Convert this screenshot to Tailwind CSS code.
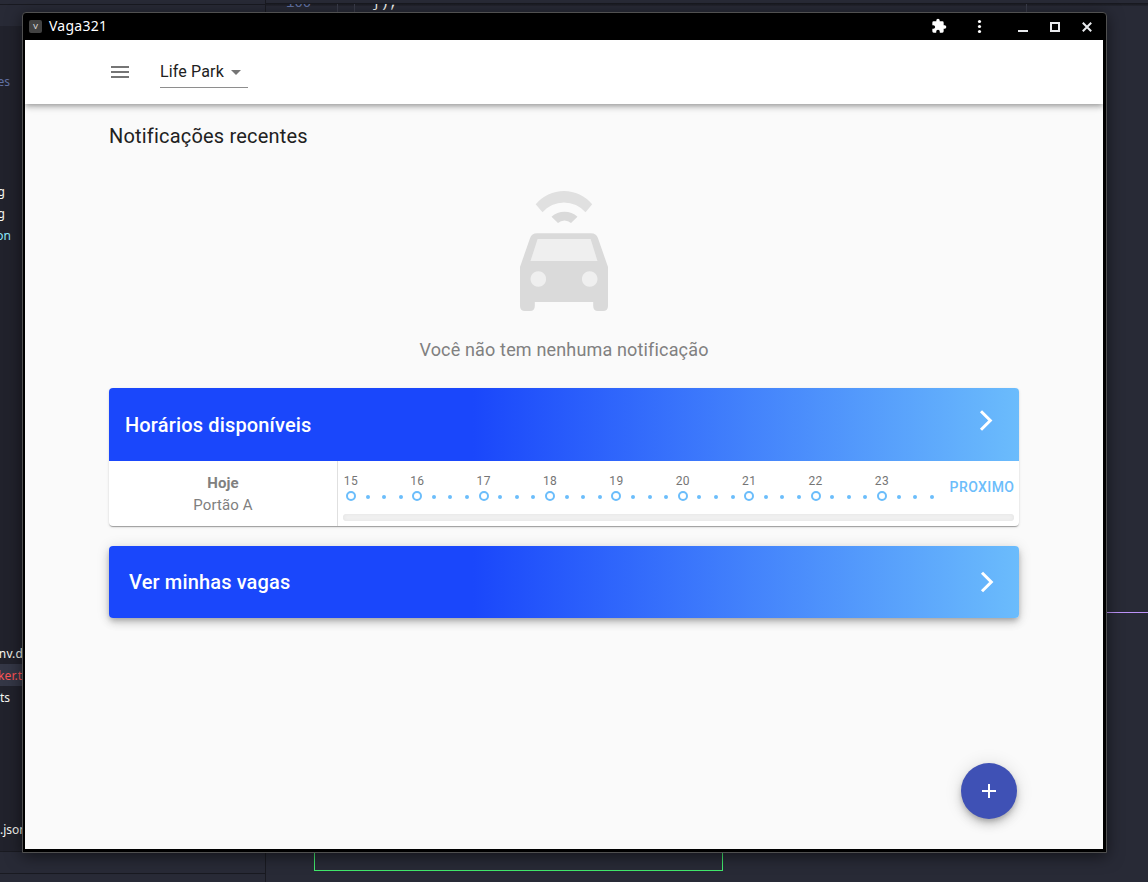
<!DOCTYPE html>
<html lang="pt-BR">
<head>
<meta charset="utf-8">
<title>Vaga321</title>
<script src="https://cdn.jsdelivr.net/npm/@tailwindcss/browser@4"></script>
</head>
<body class="relative w-[1148px] h-[882px] overflow-hidden bg-[#282a36] font-['Roboto',sans-serif]">

<!-- Code editor behind the window -->
<div class="absolute inset-0 overflow-hidden font-['Noto_Sans',sans-serif] text-[12px] leading-[22px] text-[#f8f8f2] whitespace-nowrap">
  <div class="absolute left-0 top-[26px] w-[265px] h-[825px] bg-[#21222c]"></div>
  <div class="absolute left-0 top-[4px] w-[265px] h-px bg-[#191a21]"></div>
  <div class="absolute left-0 top-[851px] w-[265px] h-px bg-[#191a21]"></div>
  <div class="absolute left-0 top-[873px] w-[265px] h-px bg-[#191a21]"></div>
  <div class="absolute left-[265px] top-0 w-px h-[882px] bg-[#191a21]"></div>
  <div class="absolute left-[266px] top-[3px] right-0 h-[3px] bg-linear-to-b from-[#16171d] to-[#23252f]"></div>
  <div class="absolute left-[286px] top-[4px] w-[160px] h-[9px] overflow-hidden font-['Liberation_Mono',monospace] text-[14px]">
    <span class="absolute left-0 top-[-12px] text-[#6272a4]">100</span>
    <span class="absolute left-[86px] top-[-12px]">});</span>
  </div>
  <div class="absolute left-[337px] top-[4px] w-px h-[9px] bg-[#3a3c4a]"></div>
  <div class="absolute left-[354px] top-[4px] w-px h-[9px] bg-[#3a3c4a]"></div>
  <div class="absolute left-[1026px] top-[4px] w-px h-[9px] bg-[#3a3c4a]"></div>
  <div class="absolute left-0 top-[664px] w-[265px] h-[22px] bg-[#343746]"></div>
  <div class="absolute right-[1138px] top-[71px] text-[#6272a4]">nodules</div>
  <div class="absolute right-[1143px] top-[181px]">config</div>
  <div class="absolute right-[1143px] top-[203px]">config</div>
  <div class="absolute right-[1137px] top-[225px] text-[#8be9fd]">json</div>
  <div class="absolute left-[-8px] top-[643px] tracking-[0.1px]">env.d.ts</div>
  <div class="absolute left-[-2px] top-[665px] text-[#ff5555] tracking-[0.1px]">ker.ts</div>
  <div class="absolute right-[1138px] top-[687px]">.ts</div>
  <div class="absolute left-0 top-[819px]">.json</div>
  <div class="absolute left-[1100px] top-[612px] w-[48px] h-px bg-[#bd93f9]"></div>
  <div class="absolute left-[314px] top-[840px] w-[409px] h-[31px] border border-[#41e86c]"></div>
</div>

<!-- Application window -->
<div class="absolute left-[22px] top-[12px] w-[1085px] h-[841px] flex flex-col rounded-t-[4px] border border-[#505050] bg-black pl-[2px] pr-[3px] pb-[3px] shadow-[0_3px_16px_rgba(0,0,0,0.55)]">
  <div class="flex h-[27px] shrink-0 items-center pl-[4px] pr-[11px] text-white">
    <div class="flex size-[13px] items-center justify-center rounded-[2px] bg-[#424242] text-[8px] leading-none text-[#e0e0e0]">V</div>
    <div class="ml-[7px] mb-[2px] font-['Noto_Sans',sans-serif] text-[14px] leading-[20px] tracking-[0.25px]">Vaga321</div>
    <svg class="ml-auto mb-[2px] size-[16px]" viewBox="0 0 24 24" fill="#fff"><path d="M20.5 11H19V7a2 2 0 0 0-2-2h-4V3.5a2.5 2.5 0 0 0-5 0V5H4a2 2 0 0 0-2 2v3.800h1.500a2.700 2.700 0 0 1 0 5.400H2V20a2 2 0 0 0 2 2h3.800v-1.500a2.700 2.700 0 0 1 5.400 0V22H17a2 2 0 0 0 2-2v-4h1.500a2.500 2.500 0 0 0 0-5z"/></svg>
    <svg class="ml-[30px] w-[5px] h-[15px]" viewBox="0 0 5 15" fill="#fff"><circle cx="2.500" cy="2.500" r="1.600"/><circle cx="2.500" cy="7.500" r="1.600"/><circle cx="2.500" cy="12.500" r="1.600"/></svg>
    <svg class="ml-[36px] mt-px w-[10px] h-[10px]" viewBox="0 0 10 10" fill="#e8eaed"><path d="M0 8h10v2H0z"/></svg>
    <div class="ml-[22px] mt-px size-[10px] border-2 border-[#e8eaed]"></div>
    <svg class="ml-[22px] mt-px size-[10px]" viewBox="0 0 10 10" fill="none" stroke="#e8eaed" stroke-width="2"><path d="M.8.800l8.400 8.400M9.200.800L.8 9.200"/></svg>
  </div>

  <div class="relative flex flex-1 flex-col bg-[#fafafa] overflow-hidden">
    <header class="flex h-[64px] shrink-0 items-center bg-white pl-[86px] shadow-[0_2px_4px_-1px_rgba(0,0,0,0.2),0_4px_5px_0_rgba(0,0,0,0.14),0_1px_10px_0_rgba(0,0,0,0.12)]">
      <svg class="w-[18px] h-[12px]" viewBox="0 0 18 12" fill="#757575"><path d="M0 0h18v2H0zM0 5h18v2H0zM0 10h18v2H0z"/></svg>
      <div class="ml-[31px] flex h-[32px] w-[88px] items-center border-b border-[#8e8e8e] text-[16px] text-[#212121]">
        <span class="leading-[30px] whitespace-nowrap tracking-[0.15px]">Life Park</span>
        <svg class="ml-auto mr-[7px] mt-px w-[10px] h-[5px]" viewBox="0 0 10 5" fill="#757575"><path d="M0 0l5 5 5-5z"/></svg>
      </div>
    </header>

    <main class="flex flex-col px-[84px] pt-[16px]">
      <h1 class="text-[20px] leading-[32px] tracking-[0.19px] text-[#212121]">Notificações recentes</h1>

      <div class="mt-[38px] flex flex-col items-center">
        <svg class="w-[90px] h-[122px]" viewBox="519 190 90 122">
          <path fill="#e0e0e0" d="M535.700 204.300A36.500 36.500 0 0 1 592.200 204.300L585.500 212.200A28.500 28.500 0 0 0 542.500 212.200Z"/>
          <path fill="#dadada" d="M551.500 216.800A19.400 19.400 0 0 1 577.500 216.800L571 223A9.500 9.500 0 0 0 558 223Z"/>
          <path fill="#efefef" d="M534 237h60l6 27v30h-72v-30z"/>
          <path fill="#dadada" fill-rule="evenodd" d="M537 233.300H591Q596.300 233.300 598 238.200L608 267V306Q608 311 603 311H598Q593.200 311 593.200 306V302H534.800V306Q534.800 311 530 311H525Q520 311 520 306V267L530 238.200Q531.700 233.300 537 233.300ZM537.600 239L530.500 261H597.500L590.600 239ZM538.300 271.200a7.800 7.800 0 1 0 .01 0ZM589.700 271.200a7.800 7.800 0 1 0 .01 0Z"/>
        </svg>
        <p class="mt-[24px] text-[18px] leading-[28px] tracking-[0.16px] text-[#808080]">Você não tem nenhuma notificação</p>
      </div>

      <section class="mt-[24px] h-[138px] overflow-hidden rounded-[4px] bg-white shadow-[0_2px_1px_-1px_rgba(0,0,0,0.2),0_1px_1px_0_rgba(0,0,0,0.14),0_1px_3px_0_rgba(0,0,0,0.12)]">
        <div class="flex h-[73px] items-center justify-between bg-linear-to-r/srgb from-[#1a47fb] from-40% to-[#6bbcfc] px-[16px] text-white">
          <h2 class="text-[20px] font-medium tracking-[0.16px]">Horários disponíveis</h2>
          <svg class="mb-[8px] mr-[10px] w-[14px] h-[22px]" viewBox="0 0 14 22" fill="none" stroke="#fff" stroke-width="3"><path d="M2 1.200L11.300 10.500L2 19.800"/></svg>
        </div>
        <div class="flex h-[65px]">
          <div class="flex w-[229px] shrink-0 flex-col items-center justify-center border-r border-[#e0e0e0] text-[15px] leading-[22px] text-[#808080] tracking-[0.1px]">
            <b class="font-bold">Hoje</b>
            <span>Portão A</span>
          </div>
          <div class="flex flex-1 flex-col pl-[5px] pr-[5px] pt-[12px]">
            <div class="flex h-[30px]">
              <div id="timeline" class="-ml-[0.4px] flex w-[597.4px] shrink-0"></div>
              <div class="ml-[9.600px] mt-[2px] text-[14px] font-medium leading-[24px] tracking-[0.4px] text-[#6bbdfb]">PROXIMO</div>
            </div>
            <div class="mt-[11px] h-[7px] rounded-[3px] bg-[#f1f1f1] shadow-[inset_0_0_4px_rgba(0,0,0,0.06)]"></div>
          </div>
        </div>
      </section>

      <section class="mt-[20px] flex h-[72px] items-center justify-between rounded-[4px] bg-linear-to-r/srgb from-[#1a47fb] from-40% to-[#6bbcfc] pl-[20px] pr-[25px] text-white shadow-[0_3px_5px_-1px_rgba(0,0,0,0.2),0_5px_8px_0_rgba(0,0,0,0.14),0_1px_14px_0_rgba(0,0,0,0.12)]">
        <h2 class="text-[20px] font-medium tracking-[0.15px]">Ver minhas vagas</h2>
        <svg class="w-[14px] h-[22px]" viewBox="0 0 14 22" fill="none" stroke="#fff" stroke-width="3"><path d="M2 1.700L11.300 11L2 20.300"/></svg>
      </section>
    </main>

    <button class="absolute left-[936px] top-[723px] flex size-[56px] items-center justify-center rounded-full bg-[#3f51b5] shadow-[0_3px_5px_-1px_rgba(0,0,0,0.2),0_6px_10px_0_rgba(0,0,0,0.14),0_1px_18px_0_rgba(0,0,0,0.12)]">
      <svg class="size-[14px]" viewBox="0 0 14 14" fill="#fff"><path d="M6 0h2v6h6v2H8v6H6V8H0V6h6z"/></svg>
    </button>
  </div>
</div>

<script>
  // One slot per quarter of an hour, with a labelled ring on each full hour.
  const timeline = document.getElementById('timeline');
  for (let i = 0; i < 36; i++) {
    const hour = i % 4 === 0;
    const slot = document.createElement('div');
    slot.className = 'flex flex-1 min-w-0 flex-col items-center';
    slot.innerHTML =
      '<span class="h-[16px] text-[12px] leading-[16px] tracking-[0.3px] text-[#757575]">' + (hour ? 15 + i / 4 : '') + '</span>' +
      '<span class="flex h-[14px] items-center">' +
      (hour ? '<i class="size-[10px] rounded-full border-2 border-[#6bbdfb]"></i>'
            : '<i class="mt-[1px] size-[4px] rounded-full bg-[#6bbdfb]"></i>') + '</span>';
    timeline.appendChild(slot);
  }
</script>
</body>
</html>
